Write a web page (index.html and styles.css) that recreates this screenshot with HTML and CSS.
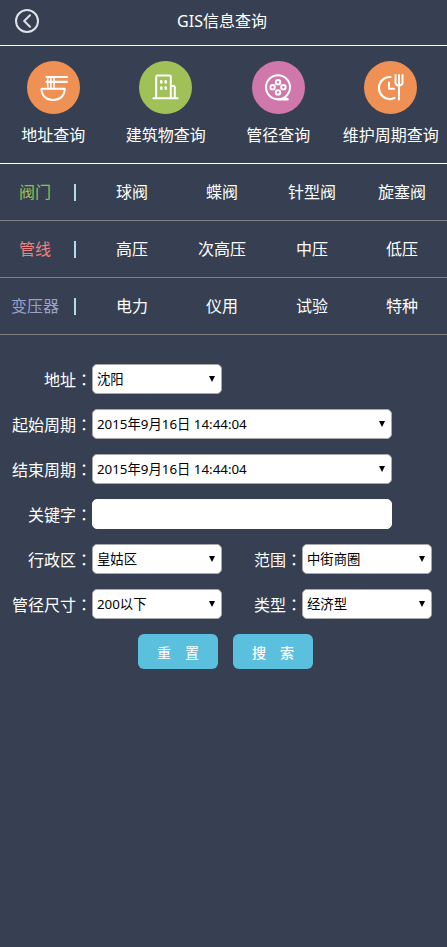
FILE: index.html
```html
<!DOCTYPE html>
<html lang="zh-CN">
<head>
<meta charset="utf-8">
<meta name="viewport" content="width=device-width, initial-scale=1">
<title>GIS信息查询</title>
<link rel="stylesheet" href="styles.css">
</head>
<body>
<header class="topbar">
  <a class="back" href="#" aria-label="返回">
    <svg viewBox="0 0 24 24" width="24" height="24" fill="none" stroke="#dfe2e6" stroke-width="2" stroke-linecap="round">
      <circle cx="12" cy="12" r="11"/>
      <path d="M15 6.2 9.2 12l5.8 5.8"/>
    </svg>
  </a>
  <h1 class="title">GIS信息查询</h1>
</header>

<nav class="queries">
  <a class="query" href="#">
    <svg class="query-icon" viewBox="0 0 53 53" fill="none" stroke="#fff" stroke-width="2" stroke-linecap="round" stroke-linejoin="round">
      <circle cx="26.5" cy="26.5" r="26.5" fill="#ef9155" stroke="none"/>
      <path d="M19.5 16h20.5M19.5 20.8h20.5" stroke-width="2.2"/>
      <path d="M20.7 15.5v11.5M23.8 15.5v11.5M27 15.5v11.5" stroke-width="1.6"/>
      <path d="M14.5 27.8h23.2c0 6.8-4.7 11.2-11.6 11.2s-11.6-4.4-11.6-11.2z"/>
    </svg>
    <span>地址查询</span>
  </a>
  <a class="query" href="#">
    <svg class="query-icon" viewBox="0 0 53 53" fill="none" stroke="#fff" stroke-width="2" stroke-linecap="round" stroke-linejoin="round">
      <circle cx="26.5" cy="26.5" r="26.5" fill="#a0c157" stroke="none"/>
      <path d="M17.2 36.8v-21.2q0-1.200 1.200-1.200h12.200q1.200 0 1.200 1.200v21.200M31.800 25h2.800q1.200 0 1.200 1.200v10.600M14.300 37.200h24.400"/>
      <path d="M22.300 20.200v1.200M26.700 20.200v1.200M22.300 26.500v1.200M26.700 26.500v1.200" stroke-width="2.600"/>
    </svg>
    <span>建筑物查询</span>
  </a>
  <a class="query" href="#">
    <svg class="query-icon" viewBox="0 0 53 53" fill="none" stroke="#fff" stroke-width="2" stroke-linecap="round" stroke-linejoin="round">
      <circle cx="26.5" cy="26.5" r="26.5" fill="#d078ab" stroke="none"/>
      <circle cx="26" cy="26.3" r="12"/>
      <circle cx="26" cy="21.2" r="2.2"/>
      <circle cx="20.6" cy="26.3" r="2.2"/>
      <circle cx="31.4" cy="26.3" r="2.2"/>
      <circle cx="26" cy="31.4" r="2.2"/>
      <path d="M26 38.4h9.7M32 36.8l3.7 1.4" stroke-width="2.2"/>
    </svg>
    <span>管径查询</span>
  </a>
  <a class="query" href="#">
    <svg class="query-icon" viewBox="0 0 53 53" fill="none" stroke="#fff" stroke-width="2" stroke-linecap="round" stroke-linejoin="round">
      <circle cx="26.5" cy="26.5" r="26.5" fill="#ef9155" stroke="none"/>
      <path d="M26.5 16a11 11 0 1 0 4 21" stroke-width="2.2"/>
      <path d="M25 21.500v6.200h5"/>
      <path d="M31.500 14v7.500q0 3 3.500 3t3.500-3v-7.500M35 14v24.500"/>
    </svg>
    <span>维护周期查询</span>
  </a>
</nav>

<main>
  <section class="category">
    <h2 class="category-name valve">阀门</h2>
    <a href="#">球阀</a><a href="#">蝶阀</a><a href="#">针型阀</a><a href="#">旋塞阀</a>
  </section>
  <section class="category">
    <h2 class="category-name pipeline">管线</h2>
    <a href="#">高压</a><a href="#">次高压</a><a href="#">中压</a><a href="#">低压</a>
  </section>
  <section class="category">
    <h2 class="category-name transformer">变压器</h2>
    <a href="#">电力</a><a href="#">仪用</a><a href="#">试验</a><a href="#">特种</a>
  </section>

  <form class="search">
    <label for="address">地址<span class="colon" lang="zh-TW">：</span></label>
    <div class="select"><select id="address"><option>沈阳</option></select></div>

    <label class="first" for="start">起始周期<span class="colon" lang="zh-TW">：</span></label>
    <div class="select wide"><select id="start"><option>2015年9月16日 14:44:04</option></select></div>

    <label class="first" for="end">结束周期<span class="colon" lang="zh-TW">：</span></label>
    <div class="select wide"><select id="end"><option>2015年9月16日 14:44:04</option></select></div>

    <label class="first" for="keyword">关键字<span class="colon" lang="zh-TW">：</span></label>
    <div class="wide"><input id="keyword" type="text"></div>

    <label class="first" for="district">行政区<span class="colon" lang="zh-TW">：</span></label>
    <div class="select"><select id="district"><option>皇姑区</option></select></div>
    <label for="range">范围<span class="colon" lang="zh-TW">：</span></label>
    <div class="select"><select id="range"><option>中街商圈</option></select></div>

    <label class="first" for="size">管径尺寸<span class="colon" lang="zh-TW">：</span></label>
    <div class="select"><select id="size"><option>200以下</option></select></div>
    <label for="type">类型<span class="colon" lang="zh-TW">：</span></label>
    <div class="select"><select id="type"><option>经济型</option></select></div>

    <div class="actions">
      <button type="reset">重　置</button>
      <button type="submit">搜　索</button>
    </div>
  </form>
</main>
</body>
</html>
```
FILE: styles.css
```css
* {
  box-sizing: border-box;
}

body {
  margin: 0;
  background: #364052;
  color: #fff;
  font: 16px/24px "Noto Sans", "Noto Sans CJK SC", sans-serif;
}

a {
  color: inherit;
  text-decoration: none;
}

h1,
h2 {
  margin: 0;
  font-size: 16px;
  font-weight: 400;
}

.topbar {
  display: grid;
  grid-template-columns: 24px 1fr 27px;
  align-items: center;
  padding: 9px 15px 12px;
  border-bottom: 1px solid #fff;
}

.back svg {
  display: block;
}

.title {
  text-align: center;
}

.queries {
  display: grid;
  grid-template-columns: repeat(4, 1fr);
  margin-left: -3px;
  padding: 15px 0 16px;
  border-bottom: 1px solid #fff;
}

.query {
  display: flex;
  flex-direction: column;
  align-items: center;
  gap: 9px;
  white-space: nowrap;
}

.query-icon {
  display: block;
  width: 53px;
  height: 53px;
}

.category {
  display: grid;
  grid-template-columns: 87px repeat(4, 1fr);
  align-items: center;
  padding: 16px 0;
  border-bottom: 1px solid #808080;
  text-align: center;
}

.category-name {
  display: grid;
  grid-template-columns: 70px 2px;
  align-items: center;
  column-gap: 4px;
}

.category-name::after {
  content: "";
  height: 17px;
  background: #b4d8ee;
}

.valve {
  color: #96c050;
}

.pipeline {
  color: #f08080;
}

.transformer {
  color: #9c9fc8;
}

.search {
  display: grid;
  grid-template-columns: 92px 1fr 80px 1fr;
  row-gap: 15px;
  align-items: center;
  padding: 29px 15px 29px 0;
}

.search label {
  text-align: right;
  white-space: nowrap;
}

.search .first {
  grid-column: 1;
}

.colon {
  font-family: "Noto Sans CJK TC", sans-serif;
}

.wide {
  grid-column: 2 / -1;
  width: 100%;
  max-width: 300px;
}

.select {
  position: relative;
}

.select::after {
  content: "";
  position: absolute;
  top: 12px;
  right: 7px;
  width: 6px;
  height: 6px;
  background: #000;
  clip-path: polygon(0 0, 100% 0, 50% 100%);
  pointer-events: none;
}

select,
input {
  display: block;
  appearance: none;
  width: 100%;
  height: 30px;
  margin: 0;
  padding: 0 4px;
  border: 1px solid #a9a9a9;
  border-radius: 5px;
  background: #fff;
  color: #000;
  font-family: "Noto Sans", "Noto Sans CJK SC", sans-serif;
}

input {
  border-color: #fff;
}

.actions {
  grid-column: 1 / -1;
  display: flex;
  justify-content: center;
  gap: 15px;
  padding-left: 19px;
}

button {
  padding: 0 19px;
  height: 35px;
  border: 0;
  border-radius: 6px;
  background: #5bc0de;
  color: #fff;
  font: 14px "Noto Sans CJK SC", sans-serif;
}

button[type="submit"] {
  font-weight: 500;
}
```
